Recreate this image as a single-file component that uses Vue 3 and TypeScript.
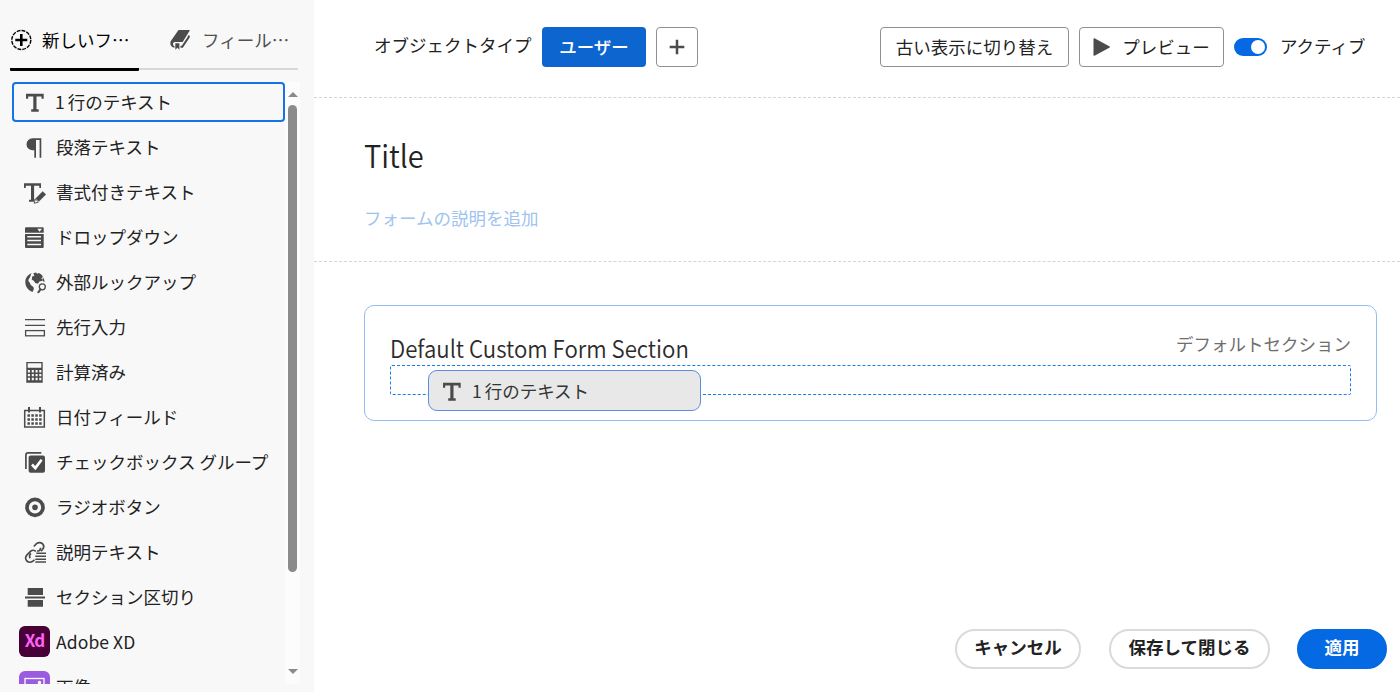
<script setup lang="ts">
import { ref } from 'vue'

interface FieldType {
  id: string
  label: string
}

const fields: FieldType[] = [
  { id: 'text', label: '1 行のテキスト' },
  { id: 'paragraph', label: '段落テキスト' },
  { id: 'rich', label: '書式付きテキスト' },
  { id: 'dropdown', label: 'ドロップダウン' },
  { id: 'lookup', label: '外部ルックアップ' },
  { id: 'typeahead', label: '先行入力' },
  { id: 'calc', label: '計算済み' },
  { id: 'date', label: '日付フィールド' },
  { id: 'checkbox', label: 'チェックボックス グループ' },
  { id: 'radio', label: 'ラジオボタン' },
  { id: 'descriptive', label: '説明テキスト' },
  { id: 'section', label: 'セクション区切り' },
  { id: 'xd', label: 'Adobe XD' },
  { id: 'image', label: '画像' },
]

const selected = ref('text')
const active = ref(true)
</script>

<template>
  <div class="app">
    <aside class="sidebar">
      <nav class="tabs">
        <div class="tab current">
          <svg class="tab-icon" width="22" height="22" viewBox="0 0 22 22">
            <circle cx="11.300" cy="11" r="9.500" fill="none" stroke="#000" stroke-width="1.400" stroke-dasharray="3.850 1.120" />
            <path d="M11.300 5v12M5.300 11h12" stroke="#000" stroke-width="2.600" />
          </svg>
          <span>新しいフ…</span>
        </div>
        <div class="tab">
          <svg class="tab-icon" width="22" height="22" viewBox="0 0 22 22">
            <path d="M8.500 1H19.500Q20 1 19.600 1.700L13 12.500Q12.700 13 12 13H5C3.200 13 2.600 14.600 3.300 16.200Q3.600 16.800 4.500 17.200V18.800C1.200 18.400-.5 15.500.700 12.300Z" fill="#4b4b4b" />
            <path d="M19 6.500L18.600 8.300 12.300 17.700H10.500" fill="none" stroke="#4b4b4b" stroke-width="2" />
            <path d="M5.300 14.300H9.400V20.800L7.400 18.700 5.300 20.800Z" fill="#4b4b4b" />
          </svg>
          <span>フィール…</span>
        </div>
      </nav>
      <div class="list-wrap">
        <div class="list">
          <div
            v-for="f in fields"
            :key="f.id"
            class="row"
            :class="{ selected: f.id === selected }"
            @click="selected = f.id"
          >
            <span v-if="f.id === 'xd'" class="tile xd">Xd</span>
            <span v-else-if="f.id === 'image'" class="tile picture">
              <svg width="31" height="31" viewBox="0 0 31 31">
                <rect x="6" y="7.500" width="19" height="16" fill="none" stroke="#fff" stroke-width="1.300" />
                <circle cx="20.500" cy="11.500" r="1.700" fill="#fff" />
                <path d="M7 19l5-6 5 6 3-3 4 5v2H7z" fill="#fff" />
              </svg>
            </span>
            <svg v-else class="icon" width="24" height="24" viewBox="0 0 24 24">
              <path v-if="f.id === 'text'" d="M3 3.700H20.700V8.700H18.500V6.500H13.500V19.300H15.700V21.700H8.200V19.300H10.300V6.500H5.200V8.700H3Z" />
              <template v-else-if="f.id === 'paragraph'">
                <path d="M9.700 3.300H18.300V5H9.700ZM16.600 3.300H18.300V22.700H16.600ZM11.300 3.300H13V22.700H11.300ZM13 3.300V15.300H9.500A6 6 0 0 1 9.500 3.300Z" />
              </template>
              <template v-else-if="f.id === 'rich'">
                <path d="M1 3.300H18V8H16.300V5.700H11.100V19.400H12.300L10.700 21.700H6V19.700H8V5.700H2.800V8H1Z" />
                <path d="M19.700 11.300L23 14.600 16 21.600 12.500 18.400Z" />
                <path d="M12.300 18.900L15.500 22 11.200 23.300Z" fill="#f8f8f8" stroke="#4b4b4b" stroke-width=".9" />
              </template>
              <template v-else-if="f.id === 'dropdown'">
                <path d="M2 3.300a1 1 0 0 1 1-1H19.700a1 1 0 0 1 1 1V7.700H2Z" />
                <path d="M14.300 3.800H19L16.600 6.700Z" fill="#f8f8f8" />
                <path d="M2 9H20.700V22a1 1 0 0 1-1 1H3a1 1 0 0 1-1-1Z" />
                <path d="M4.300 11.700H18M4.300 15.500H18M4.300 19.500H18" stroke="#f8f8f8" stroke-width="1.500" />
              </template>
              <template v-else-if="f.id === 'lookup'">
                <path d="M8.700 3.200C5 4.300 2.300 7.800 2.300 12c0 5 3.200 8.700 7.200 9.900 1-1.500 1.600-3 1.100-4.400-.6-1.700-3.200-1.900-3.400-3.700-.2-1.800-2.300-2-1.700-4.100.5-1.800 1.700-2 2-3.800.2-1 .6-1.700 1.200-2.700Z" />
                <path d="M10.300 3.300L13 2.400l1.200 1.300 1.700-.7c1.800.8 3.100 2 4 3.800l-1.700 1.500 1.500 1.200-.5 1.500-2.500.2-1.900 2.500-2.500-.7-1.600-2.200-2-1.200.6-3.300 2.100-.3Z" />
                <path d="M19.800 7c1 1.600 1.700 3.100 1.700 4.900l-1.900-.8Z" />
                <circle cx="19.300" cy="16.800" r="3" fill="none" stroke="#4b4b4b" stroke-width="1.300" />
                <path d="M17.500 19.400L15.300 22.300" stroke="#4b4b4b" stroke-width="2" stroke-linecap="round" />
              </template>
              <g v-else-if="f.id === 'typeahead'" fill="none" stroke="#4b4b4b" stroke-width="1.300">
                <path d="M2 4.700H22M2 10.300H22" />
                <rect x="2.600" y="15.600" width="18.800" height="5.200" />
              </g>
              <template v-else-if="f.id === 'calc'">
                <path fill-rule="evenodd" d="M3.300 2H19.700V22.700H3.300ZM4.700 3.300V7.700H18.300V3.300Z" />
                <path d="M5.900 10v11.500M9.800 10v11.500M13.600 10v11.500M17.300 10v11.500" stroke="#f8f8f8" stroke-width="2.100" stroke-dasharray="2.400 1.500" />
              </template>
              <template v-else-if="f.id === 'date'">
                <path d="M1.700 5.400H21.300V22H1.700Z" fill="none" stroke="#4b4b4b" stroke-width="1.500" />
                <path d="M6 2V7.500M17 2V7.500" stroke="#4b4b4b" stroke-width="2" />
                <path d="M5.700 9.300V20M9.600 9.300V20M13.500 9.300V20M17.400 9.300V20" stroke="#4b4b4b" stroke-width="2.500" stroke-dasharray="2.500 1.500" />
              </template>
              <template v-else-if="f.id === 'checkbox'">
                <path d="M2.900 19V5A2.100 2.100 0 0 1 5 2.900H18.300" fill="none" stroke="#4b4b4b" stroke-width="1.700" />
                <rect x="5.600" y="5.500" width="16.400" height="17.200" rx="2" />
                <path d="M9 14.500l3.300 3.600 6.300-8.400" fill="none" stroke="#fff" stroke-width="2.600" />
              </template>
              <template v-else-if="f.id === 'radio'">
                <circle cx="12" cy="12.400" r="8" fill="none" stroke="#4b4b4b" stroke-width="3.700" />
                <circle cx="12" cy="12.400" r="2.800" />
              </template>
              <g v-else-if="f.id === 'descriptive'" fill="none" stroke="#4b4b4b" stroke-width="1.700">
                <path d="M10.800 6.500L13.500 3.700C15.500 2 18.500 2.200 20 4.200 21.200 6 20.800 8 19.500 9.500L18 11.200M14 11c2 .2 3.600-1 3.600-3.200" />
                <path d="M11.500 19.800L9.800 21.200C7.800 22.700 5 22.500 3.500 20.600 2.300 18.800 2.500 16.500 4 14.800L7.500 11.300C9 9.900 11.600 9.800 12.800 11.500M7.200 18.200C6 16.500 6.500 14.500 8 13.500" />
                <path d="M13.300 13.200H23M12.300 16.200H23M12.300 19.200H23M12.300 22H23" stroke-width="1.500" />
              </g>
              <path v-else d="M4.700 3H20V10H4.700ZM2 11.500H22V13.500H2ZM4.700 15H20V21.700H4.700Z" />
            </svg>
            <span class="label" :class="{ tight: f.id === 'text', latin: f.id === 'xd' }">{{ f.label }}</span>
          </div>
        </div>
        <div class="scrollbar">
          <i class="arrow up"></i>
          <i class="thumb"></i>
          <i class="arrow down"></i>
        </div>
      </div>
    </aside>

    <main class="main">
      <header class="toolbar">
        <span class="caption">オブジェクトタイプ</span>
        <button class="btn primary">ユーザー</button>
        <button class="btn add" aria-label="追加">
          <svg width="16" height="16" viewBox="0 0 16 16">
            <path d="M8 .7V15.300M.700 8H15.300" stroke="#4b4b4b" stroke-width="2.500" />
          </svg>
        </button>
        <span class="spacer"></span>
        <button class="btn old">古い表示に切り替え</button>
        <button class="btn preview">
          <svg width="18" height="18" viewBox="0 0 18 18"><path d="M.5 1Q.5 0 1.500.3L16.700 8.400Q17.500 9 16.700 9.600L1.500 17.700Q.5 18 .5 17Z" fill="#4b4b4b" /></svg>
          <span>プレビュー</span>
        </button>
        <span class="switch" :class="{ on: active }" @click="active = !active"></span>
        <span class="state">アクティブ</span>
      </header>

      <section class="intro">
        <h1>Title</h1>
        <p>フォームの説明を追加</p>
      </section>

      <section class="canvas">
        <div class="card">
          <div class="card-head">
            <h2>Default Custom Form Section</h2>
            <span>デフォルトセクション</span>
          </div>
          <div class="drop">
            <div class="ghost">
              <svg width="24" height="24" viewBox="0 0 24 24" fill="#4b4b4b">
                <path d="M3 3.700H20.700V8.700H18.500V6.500H13.500V19.300H15.700V21.700H8.200V19.300H10.300V6.500H5.200V8.700H3Z" />
              </svg>
              <span class="tight">1 行のテキスト</span>
            </div>
          </div>
        </div>
      </section>

      <footer class="actions">
        <button class="pill cancel">キャンセル</button>
        <button class="pill save">保存して閉じる</button>
        <button class="pill apply">適用</button>
      </footer>
    </main>
  </div>
</template>

<style>
body {
  margin: 0;
  overflow: hidden;
}
</style>

<style scoped>
* {
  box-sizing: border-box;
}
.app {
  display: flex;
  width: 1400px;
  height: 692px;
  background: #fff;
  color: #222;
  font-family: "Noto Sans CJK JP", sans-serif;
  font-size: 17.500px;
  line-height: 26px;
  white-space: nowrap;
  overflow: hidden;
}
button {
  font: inherit;
  color: inherit;
  padding: 0;
}
.sidebar {
  width: 314px;
  flex: none;
  background: #f8f8f8;
}
.tabs {
  display: flex;
  margin-left: 10px;
  height: 71px;
}
.tab {
  display: flex;
  align-items: center;
  width: 159px;
  height: 70px;
  padding: 12px 0 0 31px;
  gap: 10px;
  border-bottom: 2px solid #d8d8d8;
  color: #505050;
}
.tab.current {
  width: 129px;
  height: 71px;
  padding: 11px 0 0;
  border-bottom: 3px solid #000;
  border-radius: 1px;
  color: #000;
}
.tab-icon {
  flex: none;
}
.list-wrap {
  display: flex;
  height: 602px;
  margin: 11px 14px 0 12px;
}
.list {
  width: 273px;
  overflow: hidden;
}
.row {
  display: flex;
  align-items: center;
  height: 40px;
  margin-bottom: 5px;
  padding-left: 11px;
  border-radius: 4px;
}
.row.selected {
  padding-left: 9px;
  border: 2px solid #1473e6;
}
.icon {
  flex: none;
  margin-right: 9px;
  fill: #4b4b4b;
}
.tight {
  margin-left: -1px;
  word-spacing: -1px;
}
.latin {
  letter-spacing: 0.1px;
}
.tile {
  flex: none;
  width: 31px;
  height: 31px;
  margin: -1px 6px 0 -4px;
  border-radius: 6px;
}
.xd {
  background: #470137;
  color: #ff61f6;
  font-size: 17px;
  font-weight: 700;
  letter-spacing: -0.8px;
  line-height: 28px;
  text-align: center;
}
.picture {
  background: #9a5be0;
}
.scrollbar {
  display: flex;
  flex-direction: column;
  align-items: center;
  width: 15px;
  padding: 10px 0;
  background: #fcfcfc;
}
.arrow {
  width: 0;
  height: 0;
  border: solid transparent;
  border-width: 0 5px;
}
.arrow.up {
  border-bottom: 5px solid #8b8b8b;
}
.arrow.down {
  margin-top: auto;
  border-top: 5px solid #8b8b8b;
}
.thumb {
  width: 9px;
  height: 467px;
  margin-top: 8px;
  border-radius: 5px;
  background: #8b8b8b;
}
.main {
  display: flex;
  flex-direction: column;
  flex: 1;
}
.toolbar {
  display: flex;
  align-items: flex-start;
  height: 98px;
  padding: 27px 0 0 60px;
  border-bottom: 1px dashed #d5d5d5;
}
.caption {
  width: 168px;
  padding-top: 5px;
}
.btn {
  display: flex;
  align-items: center;
  justify-content: center;
  height: 40px;
  border: 1px solid #909090;
  border-radius: 4px;
  background: #fff;
}
.primary {
  width: 104px;
  margin-right: 10px;
  border: 0;
  background: #0d66d0;
  color: #fff;
  font-weight: 500;
}
.add {
  width: 42px;
}
.spacer {
  flex: 1;
}
.old {
  width: 189px;
  margin-right: 10px;
}
.preview {
  width: 145px;
  margin-right: 10px;
  gap: 11px;
}
.switch {
  display: flex;
  width: 33px;
  height: 18px;
  margin: 11px 13px 0 0;
  padding: 2px;
  border-radius: 9px;
  background: #909090;
}
.switch.on {
  justify-content: flex-end;
  background: #0469e3;
}
.switch::after {
  content: "";
  width: 14px;
  height: 14px;
  border-radius: 50%;
  background: #fff;
}
.state {
  width: 120px;
  padding-top: 6px;
}
.intro {
  height: 164px;
  padding: 33px 0 0 50px;
  border-bottom: 1px dashed #d5d5d5;
}
h1 {
  margin: 0;
  font-size: 31px;
  font-weight: 350;
  line-height: 48px;
  transform: scaleX(0.935);
  transform-origin: left;
}
.intro p {
  margin: 26px 0 0;
  color: #a0c3ef;
}
.canvas {
  padding: 43px 23px 0 50px;
}
.card {
  height: 116px;
  padding: 25px 25px 0;
  border: 1px solid #92bdf4;
  border-radius: 10px;
}
.card-head {
  display: flex;
  justify-content: space-between;
  height: 34px;
  color: #6e6e6e;
}
h2 {
  margin: 0;
  color: #2c2c2c;
  font-size: 24px;
  font-weight: 350;
  line-height: 34px;
  transform: scaleX(0.925);
  transform-origin: left;
}
.drop {
  height: 30px;
  border: 1px dashed #1a7cf0;
  border-radius: 2px;
}
.ghost {
  position: relative;
  top: 4px;
  left: 37px;
  display: flex;
  align-items: center;
  gap: 9px;
  width: 273px;
  height: 41px;
  padding-left: 11px;
  border: 1px solid #5d8ce6;
  border-radius: 9px;
  background: #e8e8e8;
  color: #353535;
}
.actions {
  display: flex;
  justify-content: flex-end;
  margin: auto 13px 23px 0;
}
.pill {
  height: 40px;
  padding-bottom: 4px;
  border: 2px solid #dadada;
  border-radius: 20px;
  background: #fff;
  font-weight: 700;
}
.cancel {
  width: 126px;
  margin-right: 28px;
}
.save {
  width: 161px;
  margin-right: 27px;
}
.apply {
  width: 90px;
  border-color: #0469e3;
  background: #0469e3;
  color: #fff;
}
</style>
